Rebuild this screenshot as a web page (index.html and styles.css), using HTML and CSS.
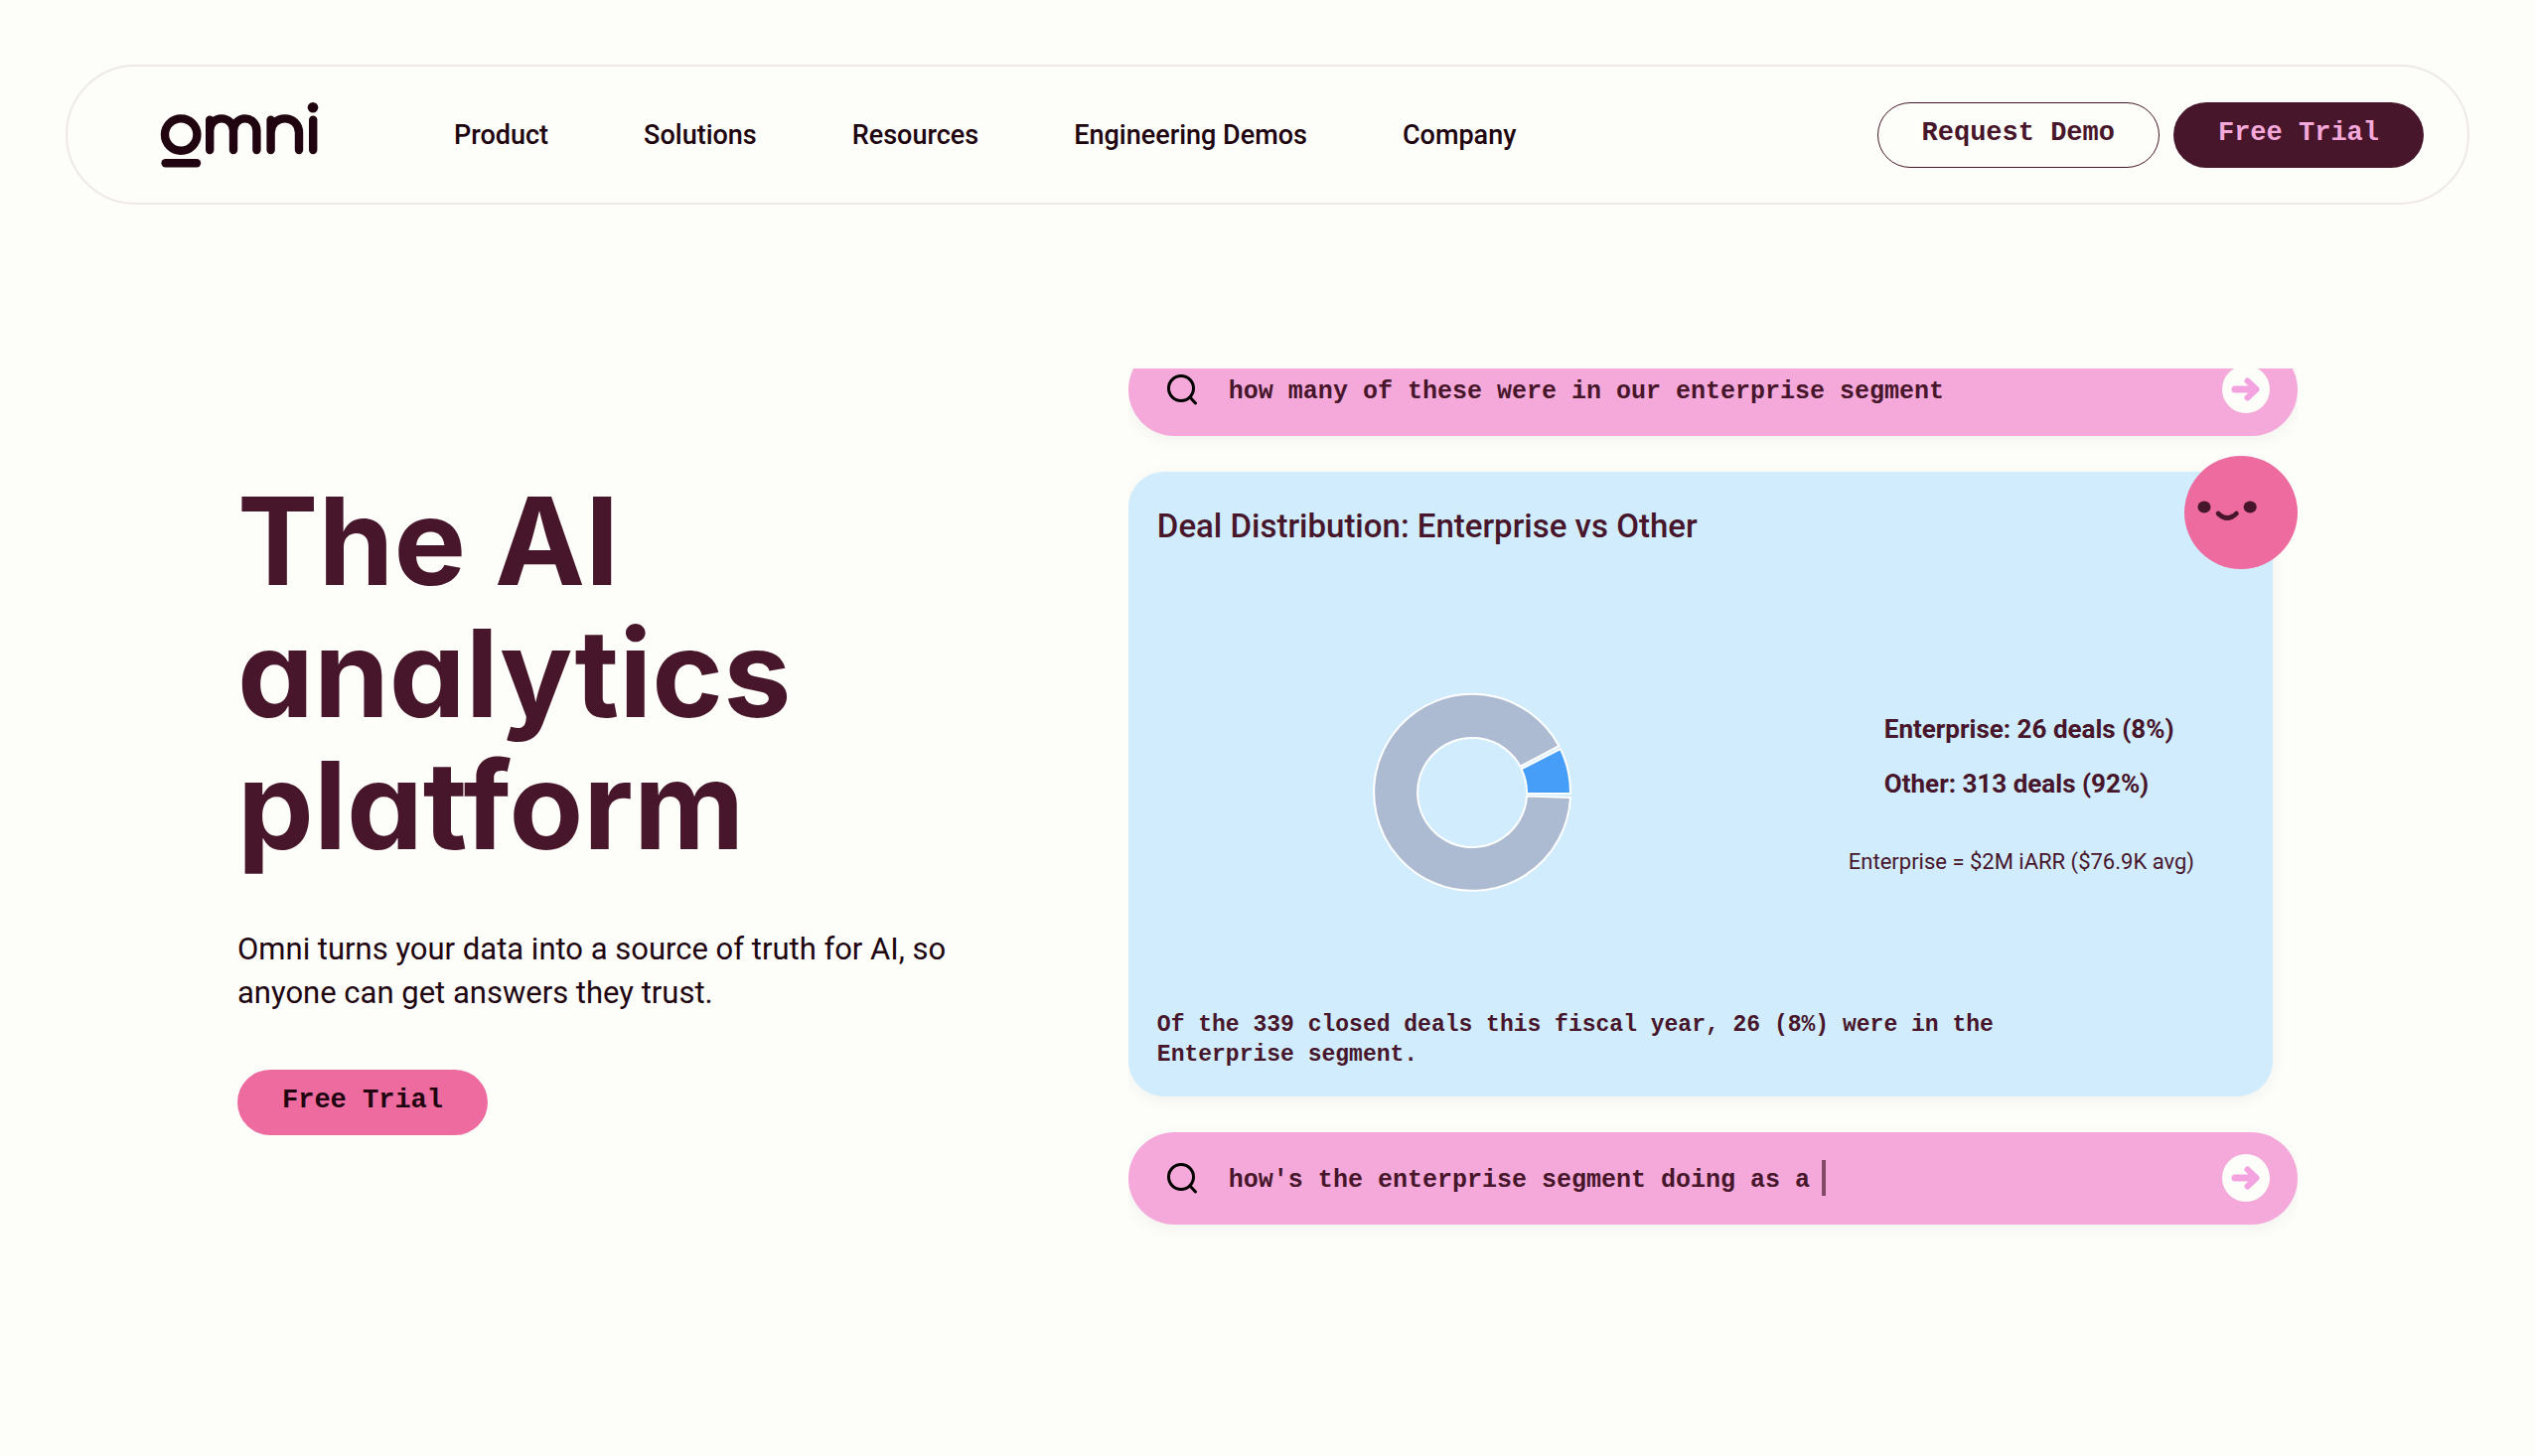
FILE: index.html
```html
<!DOCTYPE html>
<html lang="en">
<head>
<meta charset="utf-8">
<meta name="viewport" content="width=device-width, initial-scale=1">
<title>Omni – The AI analytics platform</title>
<link rel="stylesheet" href="styles.css">
</head>
<body>
<header class="site-header">
  <a class="logo" href="#" aria-label="Omni home">
    <svg width="160" height="67" viewBox="161 102 160 67" fill="none" stroke="currentColor" stroke-width="8.4" stroke-linecap="round" stroke-linejoin="round">
      <circle cx="182.200" cy="135.600" r="16.200"/>
      <path d="M166.600 164.200H198"/>
      <path d="M211.200 120.600V151M211.200 131.500C211.200 124.500 216.500 119.400 223 119.400S235 124.500 235 131.500V151M235 131.500C235 124.500 240.200 119.400 246.700 119.400S258.400 124.500 258.400 131.500V151"/>
      <path d="M272.600 120.600V151M272.600 133.500C272.600 125 279 119.400 286.800 119.400S301 125 301 133.500V151"/>
      <path d="M315.200 120.600V151"/>
      <circle cx="315" cy="108.200" r="5.300" fill="currentColor" stroke="none"/>
    </svg>
  </a>
  <nav class="main-nav" aria-label="Main">
    <a href="#">Product</a>
    <a href="#">Solutions</a>
    <a href="#">Resources</a>
    <a href="#">Engineering Demos</a>
    <a href="#">Company</a>
  </nav>
  <div class="header-actions">
    <button class="btn btn-outline" type="button">Request Demo</button>
    <button class="btn btn-dark" type="button">Free Trial</button>
  </div>
</header>

<main class="hero">
  <section class="intro">
    <h1>The AI<br>analytics<br>platform</h1>
    <p>Omni turns your data into a source of truth for AI, so anyone can get answers they trust.</p>
    <button class="btn btn-pink" type="button">Free Trial</button>
  </section>

  <section class="showcase" aria-label="Product preview">
    <div class="track">
      <form class="prompt">
        <svg class="search-icon" viewBox="0 0 32 32" fill="none" stroke="#000" stroke-width="3" stroke-linecap="round"><circle cx="14" cy="15" r="12.500"/><path d="M23 24l5.500 6"/></svg>
        <input class="prompt-text" type="text" aria-label="Earlier question" value="how many of these were in our enterprise segment" readonly>
        <button class="send" type="button" aria-label="Send earlier question">
          <svg width="48" height="48" viewBox="0 0 48 48" fill="none" stroke="currentColor" stroke-width="6" stroke-linecap="round" stroke-linejoin="round"><path d="M13 24H32" stroke-width="7"/><path d="M25.500 15.500L34.500 24L25.500 32.500"/></svg>
        </button>
      </form>

      <article class="card">
        <h2>Deal Distribution: Enterprise vs Other</h2>
        <div class="chart">
          <svg class="donut" viewBox="-100 -100 200 200" role="img" aria-label="Enterprise 8%, other 92%" stroke="#fff" stroke-width="2" stroke-linejoin="round">
            <path fill="#adbbd2" d="M98 4A98 98 0 1 1 86.500 -47.500L48 -27A54.500 54.500 0 1 0 54.500 2.500Z"/>
            <path fill="#479ef9" d="M98 0A98 98 0 0 0 88 -44.500L49 -24.500A54.500 54.500 0 0 1 54.500 0Z"/>
          </svg>
          <div class="legend">
            <ul>
              <li>Enterprise: 26 deals (8%)</li>
              <li>Other: 313 deals (92%)</li>
            </ul>
            <p>Enterprise = $2M iARR ($76.9K avg)</p>
          </div>
        </div>
        <p class="summary">Of the 339 closed deals this fiscal year, 26 (8%) were in the Enterprise segment.</p>
        <svg class="face" viewBox="0 0 114 114"><circle cx="57" cy="57" r="57" fill="#ee6ba0"/><ellipse cx="20" cy="51.600" rx="6.500" ry="6" fill="#47162b"/><ellipse cx="66.200" cy="51.600" rx="6.500" ry="6" fill="#47162b"/><path d="M34 58Q43 67 52.500 58" fill="none" stroke="#47162b" stroke-width="4.600" stroke-linecap="round"/></svg>
      </article>

      <form class="prompt">
        <svg class="search-icon" viewBox="0 0 32 32" fill="none" stroke="#000" stroke-width="3" stroke-linecap="round"><circle cx="14" cy="15" r="12.500"/><path d="M23 24l5.500 6"/></svg>
        <input class="prompt-text prompt-typing" type="text" aria-label="Current question" value="how's the enterprise segment doing as a">
        <span class="caret"></span>
        <button class="send" type="button" aria-label="Send current question">
          <svg width="48" height="48" viewBox="0 0 48 48" fill="none" stroke="currentColor" stroke-width="6" stroke-linecap="round" stroke-linejoin="round"><path d="M13 24H32" stroke-width="7"/><path d="M25.500 15.500L34.500 24L25.500 32.500"/></svg>
        </button>
      </form>
    </div>
  </section>
</main>
</body>
</html>
```
FILE: styles.css
```css
:root {
  --paper: #fdfdf9;
  --ink: #200510;
  --plum: #47162b;
  --pink: #ee6ba0;
  --orchid: #f4a9da;
  --sky: #d0ecfd;
  --sans: Roboto, "Noto Sans", sans-serif;
  --mono: "Liberation Mono", monospace;
}

* {
  box-sizing: border-box;
}

body {
  margin: 0;
  background: var(--paper);
  color: var(--ink);
  font-family: var(--sans);
}

h1,
h2,
p,
ul {
  margin: 0;
  padding: 0;
}

.site-header {
  display: flex;
  align-items: center;
  margin: 65px 66px 0;
  padding: 35px 44px 35px 93px;
  border: 2px solid #eee8e6;
  border-radius: 71px;
}

.logo {
  display: flex;
  color: var(--ink);
}

.main-nav {
  display: flex;
  gap: 96px;
  margin-left: 136px;
}

.main-nav a {
  color: var(--ink);
  font-size: 27px;
  line-height: 36px;
  font-weight: 500;
  text-decoration: none;
  white-space: nowrap;
}

.header-actions {
  display: flex;
  gap: 14px;
  margin-left: auto;
}

.btn {
  height: 66px;
  padding: 0 44px 3px;
  border: 1px solid transparent;
  border-radius: 33px;
  font-family: var(--mono);
  font-size: 27px;
  font-weight: 700;
  white-space: nowrap;
}

.btn-outline {
  border-color: var(--plum);
  background: transparent;
  color: var(--plum);
}

.btn-dark {
  background: var(--plum);
  color: var(--orchid);
}

.btn-pink {
  background: var(--pink);
  color: var(--ink);
}

.hero {
  display: grid;
  grid-template-columns: 16fr 21fr;
  align-items: center;
  padding: 165px 239px 120px;
}

.intro h1 {
  color: var(--plum);
  font-family: Inter, sans-serif;
  font-size: 122px;
  line-height: 133px;
  font-weight: 700;
  font-feature-settings: "cv11";
}

.intro p {
  max-width: 740px;
  margin: 57px 0 55px;
  font-size: 31px;
  line-height: 44px;
}

.showcase {
  overflow: hidden;
}

.track {
  display: flex;
  flex-direction: column;
  gap: 36px;
  margin-top: -25px;
  padding-bottom: 16px;
}

.prompt {
  display: flex;
  align-items: center;
  height: 93px;
  padding: 0 28px 2px 39px;
  border-radius: 47px;
  background: var(--orchid);
  box-shadow: 0 4px 16px rgba(0, 0, 0, 0.05);
}

.search-icon {
  flex: none;
  width: 32px;
  height: 32px;
  margin-right: 30px;
}

.prompt-text {
  flex: 1;
  min-width: 0;
  padding: 5px 0 0;
  border: 0;
  outline: 0;
  background: transparent;
  color: var(--plum);
  font-family: var(--mono);
  font-size: 25px;
  font-weight: 700;
}

.prompt-typing {
  flex: 0 1 auto;
  width: 39ch;
}

.caret {
  width: 4px;
  height: 36px;
  margin-left: 12px;
  background: var(--plum);
  opacity: 0.65;
}

.send {
  flex: none;
  width: 48px;
  height: 48px;
  margin-left: auto;
  padding: 0;
  border: 0;
  border-radius: 50%;
  background: var(--paper);
  color: #f3a4e0;
}

.send svg {
  display: block;
}

.card {
  position: relative;
  margin-right: 25px;
  padding: 34px 29px 27px;
  border-radius: 36px;
  background: var(--sky);
  color: var(--plum);
  box-shadow: 0 4px 16px rgba(0, 0, 0, 0.05);
}

.card h2 {
  font-size: 33px;
  line-height: 42px;
  font-weight: 500;
}

.chart {
  display: flex;
  align-items: center;
  justify-content: space-between;
  padding: 147px 50px 117px 216px;
}

.donut {
  flex: none;
  width: 202px;
  height: 202px;
}

.legend ul {
  display: grid;
  gap: 19px;
  margin: 0 0 46px;
  padding-left: 36px;
  list-style: none;
  font-size: 26px;
  line-height: 36px;
  font-weight: 700;
}

.legend p {
  font-size: 22px;
  line-height: 30px;
}

.summary {
  max-width: 900px;
  font-family: var(--mono);
  font-size: 23px;
  line-height: 30px;
  font-weight: 700;
}

.face {
  position: absolute;
  top: -16px;
  right: -25px;
  width: 114px;
  height: 114px;
}
```
